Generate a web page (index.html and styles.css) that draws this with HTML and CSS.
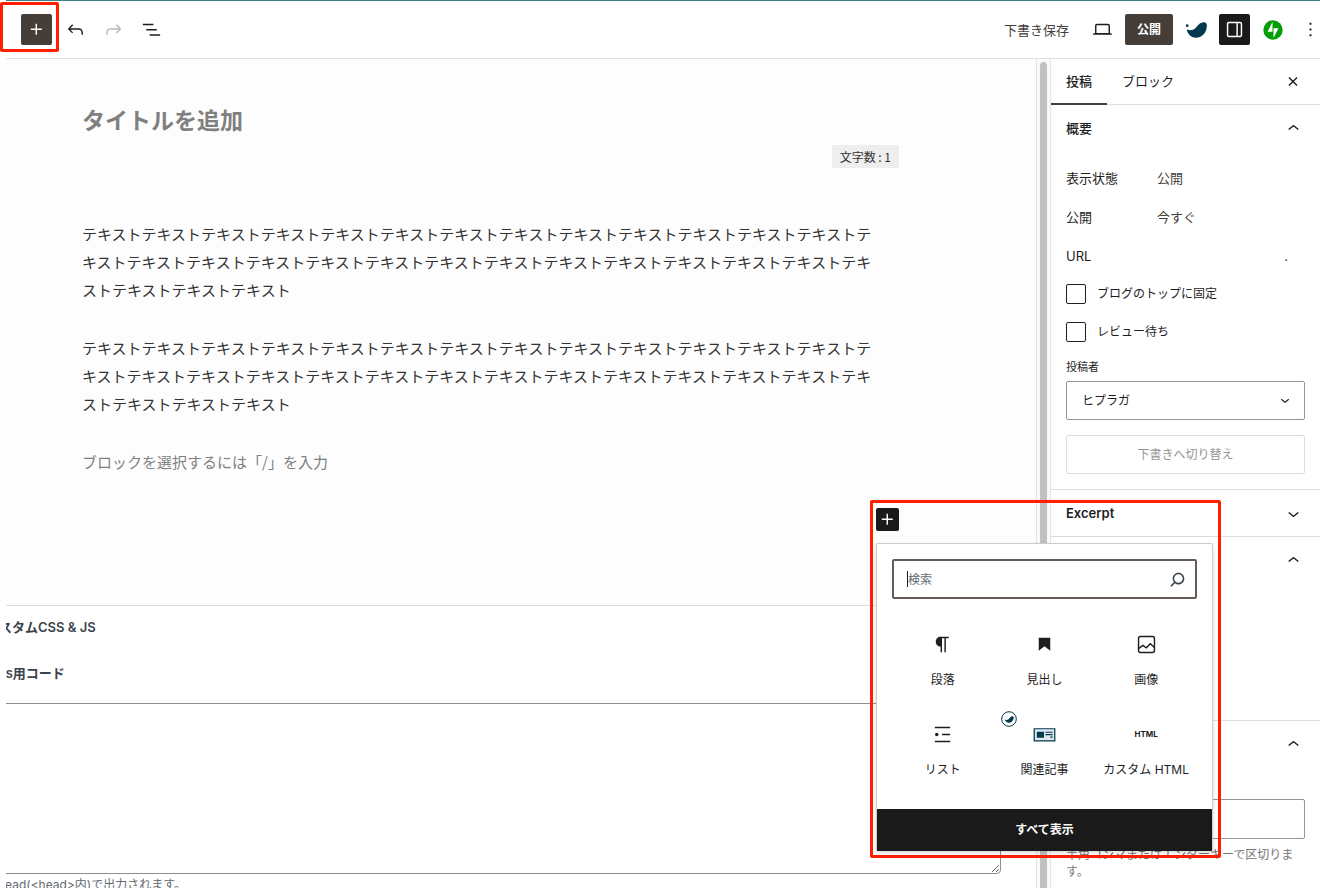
FILE: index.html
```
<!DOCTYPE html>
<html lang="ja">
<head>
    <meta charset="UTF-8">
    <meta name="viewport" content="width=device-width, initial-scale=1.0">
    <title>投稿を編集</title>
    <link rel="stylesheet" href="styles.css">
</head>
<body>
    <header class="toolbar">
        <div class="highlight highlight-inserter">
            <button class="btn-dark" type="button" aria-label="ブロック挿入ツール">
                <svg viewBox="0 0 24 24"><path d="M11 12.5V17.5H12.5V12.5H17.5V11H12.5V6H11V11H6V12.5H11Z"/></svg>
            </button>
        </div>
        <div class="tools">
            <button class="icon-btn" type="button" aria-label="元に戻す">
                <svg viewBox="0 0 24 24"><path d="M18.3 11.7c-.6-.6-1.4-.9-2.3-.9H6.7l2.9-3.3-1.1-1-4.5 5L8.5 16l1-1-2.7-2.7H16c.5 0 .9.2 1.3.5 1 1 1 3.4 1 4.5v.3h1.5v-.2c0-1.5 0-4.3-1.5-5.7z"/></svg>
            </button>
            <button class="icon-btn" type="button" aria-label="やり直す" disabled>
                <svg viewBox="0 0 24 24"><path d="M15.6 6.5l-1.1 1 2.9 3.3H8c-.9 0-1.7.3-2.3.9-1.4 1.5-1.4 4.2-1.4 5.6v.2h1.5v-.3c0-1.1 0-3.5 1-4.5.3-.3.7-.5 1.3-.5h9.2L14.5 15l1.1 1.1 4.6-4.6-4.6-5z"/></svg>
            </button>
            <button class="icon-btn" type="button" aria-label="リスト表示">
                <svg viewBox="0 0 24 24"><path d="M3 6h11v1.5H3V6Zm3.5 5.5h11V13h-11v-1.5ZM21 17H10v1.5h11V17Z"/></svg>
            </button>
        </div>

        <div class="actions">
            <button class="save-draft" type="button">下書き保存</button>
            <button class="icon-btn preview" type="button" aria-label="プレビュー">
                <svg viewBox="0 0 24 24"><path d="M20.5 16h-.7V8c0-1.1-.9-2-2-2H6.2c-1.1 0-2 .9-2 2v8h-.7c-.8 0-1.5.7-1.5 1.5h20c0-.8-.7-1.5-1.5-1.5zM5.7 8c0-.3.2-.5.5-.5h11.6c.3 0 .5.2.5.5v7.6H5.7V8z"/></svg>
            </button>
            <button class="publish" type="button">公開</button>
            <button class="icon-btn swell" type="button" aria-label="SWELL設定">
                <svg viewBox="0 0 24 24"><path d="M1.800 11.800c3 1.600 6.700 1.300 9.200-1.300 2.200-2.400 4.300-5.900 8.500-6.100 2.500-.1 3.600 1.700 3.300 4.600-.4 4.300-2.500 8-6.300 10.300C10.500 22.700 3 19.500 1.800 11.800z"/><circle cx="2.300" cy="8" r="1.400"/></svg>
            </button>
            <button class="btn-dark btn-black" type="button" aria-label="設定">
                <svg viewBox="0 0 24 24"><path d="M18 4H6c-1.100 0-2 .9-2 2v12c0 1.100.9 2 2 2h12c1.100 0 2-.9 2-2V6c0-1.100-.9-2-2-2zm-4 14.500H6c-.3 0-.5-.2-.5-.5V6c0-.3.2-.5.5-.5h8v13zm4.500-.5c0 .3-.2.5-.5.5h-2.500v-13H18c.3 0 .5.2.5.5v12z"/></svg>
            </button>
            <button class="icon-btn jetpack" type="button" aria-label="Jetpack">
                <svg viewBox="0 0 20 20"><circle cx="10" cy="10" r="9.700" fill="#069e08"/><path d="M9.500 2v9.700H4.500zM10.500 18V8.300h5z" fill="#fff"/></svg>
            </button>
            <button class="icon-btn more" type="button" aria-label="オプション">
                <svg viewBox="0 0 24 24"><path d="M13 19h-2v-2h2v2zm0-6h-2v-2h2v2zm0-6h-2V5h2v2z"/></svg>
            </button>
        </div>
    </header>

    <main class="workspace">
        <div class="editor">
            <section class="canvas">
                <h1 class="post-title">タイトルを追加</h1>
                <div class="char-count">文字数 : 1</div>
                <p>テキストテキストテキストテキストテキストテキストテキストテキストテキストテキストテキストテキストテキストテキストテキストテキストテキストテキストテキストテキストテキストテキストテキストテキストテキストテキストテキストテキストテキストテキスト</p>
                <p>テキストテキストテキストテキストテキストテキストテキストテキストテキストテキストテキストテキストテキストテキストテキストテキストテキストテキストテキストテキストテキストテキストテキストテキストテキストテキストテキストテキストテキストテキスト</p>
                <p class="hint">ブロックを選択するには「/」を入力</p>
            </section>

            <section class="metabox">
                <div class="metabox-inner">
                    <h2>カスタムCSS &amp; JS</h2>
                    <label for="css-code">css用コード</label>
                    <textarea id="css-code"></textarea>
                    <p>head(&lt;head&gt;内)で出力されます。</p>
                </div>
            </section>
        </div>

        <div class="scrollbar"><div class="thumb"></div></div>

        <aside class="sidebar">
            <div class="tabs">
                <button class="tab active" type="button">投稿</button>
                <button class="tab" type="button">ブロック</button>
                <button class="icon-btn close" type="button" aria-label="設定を閉じる">
                    <svg viewBox="0 0 24 24"><path d="M12 13.060l3.712 3.713 1.061-1.060L13.061 12l3.712-3.712-1.060-1.060L12 10.938 8.288 7.227l-1.061 1.060L10.939 12l-3.712 3.712 1.060 1.061L12 13.061z"/></svg>
                </button>
            </div>

            <section class="panel">
                <button class="panel-head" type="button">概要
                    <svg viewBox="0 0 24 24"><path d="M6.500 12.400L12 8l5.500 4.400-.9 1.200L12 10l-4.500 3.600-1-1.200z"/></svg>
                </button>
                <div class="panel-body">
                    <div class="row"><span>表示状態</span><button type="button">公開</button></div>
                    <div class="row"><span>公開</span><button type="button">今すぐ</button></div>
                    <div class="row"><span>URL</span><button class="url" type="button">.</button></div>
                    <label class="check"><input type="checkbox">ブログのトップに固定</label>
                    <label class="check"><input type="checkbox">レビュー待ち</label>
                    <label class="field-label" for="author">投稿者</label>
                    <div class="select-wrap">
                        <select id="author"><option>ヒプラガ</option></select>
                        <svg viewBox="0 0 24 24"><path d="M17.500 11.600L12 16l-5.500-4.400.9-1.200L12 14l4.500-3.600 1 1.200z"/></svg>
                    </div>
                    <button class="to-draft" type="button" disabled>下書きへ切り替え</button>
                </div>
            </section>

            <section class="panel">
                <button class="panel-head panel-head-en" type="button">Excerpt
                    <svg viewBox="0 0 24 24"><path d="M17.500 11.600L12 16l-5.500-4.400.9-1.200L12 14l4.500-3.600 1 1.200z"/></svg>
                </button>
            </section>

            <section class="panel panel-category">
                <button class="panel-head" type="button" aria-label="カテゴリー">
                    <svg viewBox="0 0 24 24"><path d="M6.500 12.400L12 8l5.500 4.400-.9 1.200L12 10l-4.500 3.600-1-1.200z"/></svg>
                </button>
            </section>

            <section class="panel panel-tags">
                <button class="panel-head" type="button" aria-label="タグ">
                    <svg viewBox="0 0 24 24"><path d="M6.500 12.400L12 8l5.500 4.400-.9 1.200L12 10l-4.500 3.600-1-1.200z"/></svg>
                </button>
                <div class="panel-body">
                    <input class="tag-input" type="text" aria-label="新規タグを追加">
                    <p class="help">半角コンマまたはエンターキーで区切ります。</p>
                </div>
            </section>
        </aside>
    </main>

    <div class="highlight inserter-area">
        <button class="btn-dark btn-black btn-small" type="button" aria-label="ブロックを追加">
            <svg viewBox="0 0 24 24"><path d="M11 12.500V17.500H12.500V12.500H17.500V11H12.500V6H11V11H6V12.500H11Z"/></svg>
        </button>
        <div class="inserter">
            <div class="search">
                <input type="text" placeholder="検索" aria-label="検索">
                <svg viewBox="0 0 24 24"><path d="M13 5c-3.300 0-6 2.700-6 6 0 1.400.5 2.700 1.300 3.700l-3.800 3.800 1.100 1.100 3.800-3.800c1 .8 2.300 1.300 3.700 1.300 3.300 0 6-2.700 6-6S16.300 5 13 5zm0 10.500c-2.500 0-4.500-2-4.500-4.500s2-4.500 4.500-4.500 4.500 2 4.500 4.500-2 4.500-4.500 4.500z"/></svg>
            </div>
            <div class="blocks">
                <button class="block" type="button">
                    <svg viewBox="0 0 24 24"><path d="M10 14V20h1.500V5.500H14V20h1.500V5.500h3V4H10C7.200 4 5 6.200 5 9s2.200 5 5 5z"/></svg>
                    <span>段落</span>
                </button>
                <button class="block" type="button">
                    <svg viewBox="0 0 24 24"><path d="M6 5v13.600l6-4.750 6 4.750V5H6z"/></svg>
                    <span>見出し</span>
                </button>
                <button class="block" type="button">
                    <svg viewBox="0 0 24 24"><g fill="none" stroke="#1e1e1e" stroke-width="1.500"><rect x="3.700" y="3.700" width="16.600" height="16.600" rx="2"/><path d="M4 16l4.200-3 3.600 2.500 4.200-4.300 4.300 4"/></g></svg>
                    <span>画像</span>
                </button>
                <button class="block" type="button">
                    <svg viewBox="0 0 24 24"><path d="M4 4h16v1.500H4zM11.500 11.250H20v1.500h-8.500zM4 18.500h16V20H4z"/><circle cx="6" cy="12" r="1.800"/></svg>
                    <span>リスト</span>
                </button>
                <button class="block" type="button">
                    <svg class="badge" viewBox="0 0 16 16"><circle cx="8" cy="8" r="7.300" fill="#fff" stroke="#04384c"/><path d="M3.800 8.600c1.500.7 2.900.5 4-.6.9-1 1.900-2.700 3.600-2.800 1.200 0 1.500.9 1.300 2.100-.4 1.900-1.500 3.400-3.300 4.200-2.500 1-5.100-.3-5.600-2.900z" fill="#04384c"/></svg>
                    <svg viewBox="0 0 24 24"><path d="M1.300 6h21.400v12.600H1.300z" fill="#dceaf0" stroke="#04384c" stroke-width="1.300"/><path d="M4 9h7.500v6.500H4zM13 9h7.500v1.300H13zM13 11.600h7.500v1.200H13zM18 14.200h2.500v1.200H18z" fill="#04384c"/></svg>
                    <span>関連記事</span>
                </button>
                <button class="block" type="button">
                    <b class="html-icon">HTML</b>
                    <span>カスタム HTML</span>
                </button>
            </div>
            <button class="show-all" type="button">すべて表示</button>
        </div>
    </div>
</body>
</html>
```
FILE: styles.css
```
* {
    box-sizing: border-box;
}

body {
    display: flex;
    flex-direction: column;
    position: relative;
    height: 100vh;
    margin: 0;
    overflow: hidden;
    background: #fff;
    color: #1e1e1e;
    font-family: Inter, "Noto Sans CJK JP", sans-serif;
    font-size: 13px;
    line-height: 20px;
}

h1, h2, p {
    margin: 0;
}

button, input, select, textarea {
    font: inherit;
    color: inherit;
}

button {
    border: 0;
    padding: 0;
    background: none;
    cursor: pointer;
}

svg {
    display: block;
    flex-shrink: 0;
    width: 23px;
    height: 23px;
    fill: currentColor;
}

/* 赤枠 */
.highlight {
    border: 3px solid #ff1e00;
    border-radius: 2px;
}

/* ツールバー */
.toolbar {
    display: flex;
    align-items: center;
    flex-shrink: 0;
    position: relative;
    height: 59px;
}

.toolbar::before,
.toolbar::after {
    content: "";
    position: absolute;
    left: 6px;
    right: 0;
    height: 1px;
}

.toolbar::before {
    top: 0;
    background: #3b7f86;
}

.toolbar::after {
    bottom: 0;
    background: #e0e0e0;
}

.highlight-inserter {
    align-self: flex-start;
    width: 59px;
    margin-top: 2px;
    padding: 9px 4px 4px 18px;
}

.btn-dark {
    display: flex;
    align-items: center;
    justify-content: center;
    width: 31px;
    height: 31px;
    border-radius: 2px;
    background: #443d38;
    color: #fff;
}

.btn-black {
    background: #1a1a1a;
}

.btn-small {
    width: 23px;
    height: 23px;
}

.icon-btn:disabled {
    color: #bbb;
}

.tools {
    display: flex;
    gap: 15px;
    margin-left: 5px;
}

.actions {
    display: flex;
    align-items: center;
    margin-left: auto;
}

.save-draft {
    color: #443d38;
}

.preview {
    margin: 0 11px 0 22px;
}

.publish {
    width: 48px;
    height: 31px;
    border-radius: 2px;
    background: #443d38;
    color: #fff;
    font-size: 12px;
    font-weight: 600;
}

.swell {
    margin: 0 11px 0 12px;
    color: #04384c;
}

.jetpack {
    margin: 0 16px 0 13px;
}

.jetpack svg {
    width: 20px;
    height: 20px;
}

.more {
    width: 21px;
}

/* 本文 */
.workspace {
    display: flex;
    flex: 1;
    min-height: 0;
    padding-left: 6px;
}

.editor {
    flex: 1;
    min-width: 0;
    overflow: hidden;
}

.canvas {
    padding: 44px 137px 129px 76px;
    border-bottom: 1px solid #ddd;
    background: #fdfdfd;
    font-family: "Noto Sans CJK JP", sans-serif;
}

.post-title {
    color: #808080;
    font-size: 23px;
    line-height: 32px;
}

.char-count {
    width: fit-content;
    margin: 10px 0 52px auto;
    padding: 0 8px;
    background: #eee;
    color: #333;
    font-size: 12px;
    line-height: 23px;
}

.canvas p {
    max-width: 800px;
    margin-bottom: 30px;
    color: #333;
    font-size: 15px;
    line-height: 28px;
}

.canvas .hint {
    margin-bottom: 0;
    color: #808080;
}

/* 左端が切れたメタボックス */
.metabox {
    overflow: hidden;
    color: #3c434a;
}

.metabox-inner {
    margin: 0 35px 0 -20px;
    padding-top: 11px;
}

.metabox h2,
.metabox label {
    display: block;
    font-size: 13px;
    font-weight: 600;
    line-height: 20px;
}

.metabox label {
    margin: 26px 0 20px 5px;
}

.metabox textarea {
    display: block;
    width: 100%;
    height: 171px;
    border: 1px solid #8c8f94;
    border-radius: 4px;
    background: #fff;
    resize: vertical;
}

.metabox p {
    margin-left: 12px;
    color: #646970;
    font-size: 12px;
    line-height: 22px;
}

.scrollbar {
    width: 15px;
    padding: 3px 3px 0;
    border: solid #e4e4e4;
    border-width: 0 1px;
    background: #fafafa;
}

.thumb {
    width: 7px;
    height: 100%;
    border-radius: 4px 4px 0 0;
    background: #c1c1c1;
}

/* サイドバー */
.sidebar {
    width: 269px;
    overflow: hidden;
}

.tabs {
    display: flex;
    height: 46px;
    border-bottom: 1px solid #ddd;
}

.tab {
    height: 46px;
    padding: 0 15px 2px;
}

.tab.active {
    border-bottom: 2px solid #443d38;
    padding-bottom: 0;
    font-weight: 500;
}

.close {
    margin: 0 15px 0 auto;
}

.close svg {
    width: 24px;
}

.panel {
    border-bottom: 1px solid #ddd;
}

.panel-head {
    display: flex;
    align-items: center;
    justify-content: space-between;
    width: 100%;
    height: 46px;
    padding: 0 15px;
    font-weight: 500;
}

.panel-head-en {
    font-weight: 600;
}

.panel-head svg:only-child {
    margin-left: auto;
}

.panel-body {
    padding: 7px 15px 15px;
}

.row {
    display: flex;
    align-items: center;
    height: 39px;
}

.row span {
    width: 91px;
}

.row button {
    color: #443d38;
}

.row .url {
    margin: 0 17px 0 auto;
}

.check {
    display: flex;
    align-items: center;
    gap: 11px;
    height: 38px;
    font-size: 12px;
}

.check input {
    appearance: none;
    width: 20px;
    height: 20px;
    margin: 0;
    border: 1px solid #1e1e1e;
    border-radius: 2px;
}

.field-label {
    display: block;
    margin: 6px 0 4px;
    font-size: 11px;
}

.select-wrap {
    position: relative;
}

.select-wrap select {
    appearance: none;
    width: 100%;
    height: 39px;
    padding: 0 15px;
    border: 1px solid #949494;
    border-radius: 2px;
    background: #fff;
    font-size: 12px;
}

.select-wrap svg {
    position: absolute;
    top: 10px;
    right: 11px;
    width: 18px;
    height: 18px;
    pointer-events: none;
}

.to-draft {
    display: block;
    width: 100%;
    height: 39px;
    margin-top: 15px;
    border: 1px solid #ddd;
    border-radius: 2px;
    color: #949494;
    font-size: 12px;
}

.panel-category {
    height: 184px;
}

.panel-tags .panel-body {
    padding-top: 32px;
}

.tag-input {
    display: block;
    width: 100%;
    height: 40px;
    border: 1px solid #949494;
    border-radius: 2px;
}

.help {
    margin-top: 7px;
    color: #757575;
    font-size: 12px;
    line-height: 17px;
}

/* ブロック挿入ポップオーバー */
.inserter-area {
    position: absolute;
    top: 500px;
    right: 99px;
    width: 351px;
    padding: 5px 5px 4px 3px;
}

.inserter {
    margin-top: 12px;
    border: 1px solid #ccc;
    border-bottom: 0;
    border-radius: 2px;
    background: #fff;
    box-shadow: 0 2px 4px rgba(0, 0, 0, 0.15);
}

.search {
    display: flex;
    align-items: center;
    position: relative;
    margin: 15px 15px 0;
}

.search input {
    width: 100%;
    height: 40px;
    padding: 0 40px 0 14px;
    border: 2px solid #655c57;
    border-radius: 2px;
    font-size: 12px;
}

.search input::placeholder {
    color: #646970;
    opacity: 1;
}

/* カーソル */
.search::before {
    content: "";
    position: absolute;
    left: 15px;
    width: 1px;
    height: 16px;
    background: #1e1e1e;
}

.search svg {
    position: absolute;
    right: 8px;
    color: #3c434a;
}

.blocks {
    display: grid;
    grid-template-columns: repeat(3, 1fr);
    padding: 15px;
}

.block {
    display: flex;
    flex-direction: column;
    align-items: center;
    gap: 14px;
    position: relative;
    height: 90px;
    padding-top: 19px;
    font-size: 12px;
    white-space: nowrap;
}

.html-icon {
    font-size: 8px;
    line-height: 23px;
}

.badge {
    position: absolute;
    top: 7px;
    left: 7px;
    width: 16px;
    height: 16px;
}

.show-all {
    display: block;
    width: 100%;
    height: 42px;
    background: #1a1a1a;
    color: #fff;
    font-size: 12px;
    font-weight: 600;
}
```
